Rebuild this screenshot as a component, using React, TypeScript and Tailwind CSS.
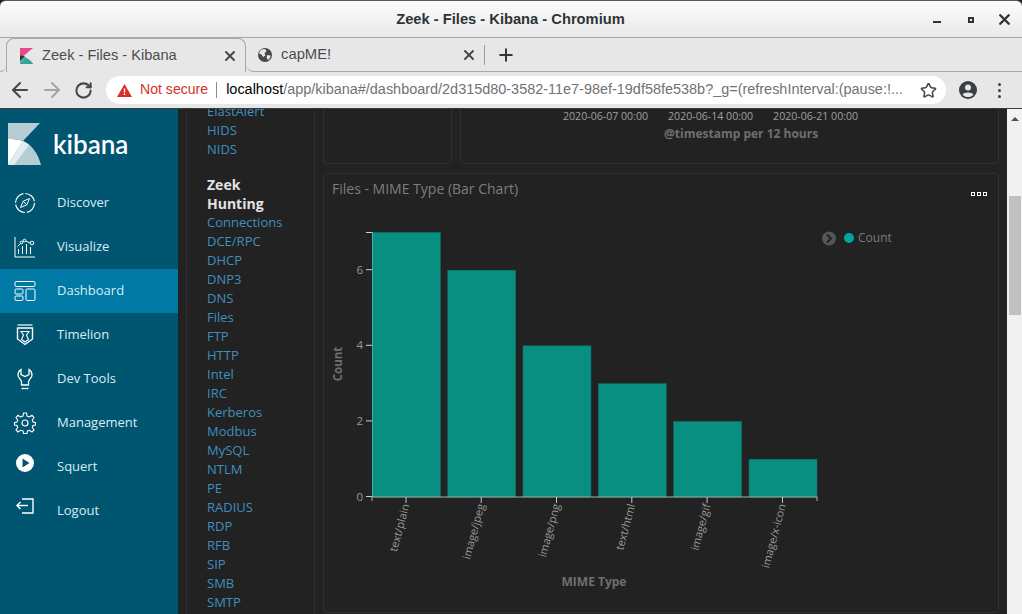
import React from 'react';
import { ArrowLeft, ArrowRight, RotateCw, Star, X, Plus } from 'lucide-react';

const sans = "font-['Liberation_Sans',Arial,sans-serif]";
const open = "font-['Open_Sans',sans-serif]";

const iconProps = {
  width: 22,
  height: 22,
  viewBox: '0 0 22 22',
  fill: 'none',
  stroke: 'white',
  strokeWidth: 1,
};

function DiscoverIcon() {
  return (
    <svg {...iconProps}>
      <circle cx="11" cy="11" r="9.5" strokeWidth="1.2" strokeDasharray="13 1.9" />
      <path d="M15.5 6.5 L12.8 12.8 L6.5 15.5 L9.2 9.2 Z" />
      <path d="M9.2 9.2 L12.8 12.8" />
    </svg>
  );
}

function VisualizeIcon() {
  return (
    <svg {...iconProps}>
      <path d="M1 1V21H21" />
      <path d="M3.5 10.5 L7.5 6.5 L10.5 4.5 L16 7" />
      <circle cx="7.5" cy="6.5" r="1.3" fill="#005571" />
      <circle cx="10.5" cy="4.5" r="1.3" fill="#005571" />
      <circle cx="18" cy="7" r="1.8" fill="#005571" />
      <path d="M4.5 13V18M8.5 10V18M12.5 8V18M16.5 11V18" />
    </svg>
  );
}

function DashboardIcon() {
  return (
    <svg {...iconProps}>
      <rect x="1" y="1.5" width="20" height="5" rx="1.2" />
      <rect x="1" y="9" width="8" height="5" rx="1.2" />
      <rect x="1" y="16" width="8" height="4.5" rx="1.2" />
      <rect x="12" y="9" width="9" height="11.5" rx="1.2" />
    </svg>
  );
}

function TimelionIcon() {
  return (
    <svg {...iconProps}>
      <path d="M3.5 1H18.5" strokeWidth="1.2" />
      <path d="M3.5 4H18.5V15L11 20.5L3.5 15Z" strokeWidth="1.4" />
      <path d="M7 7.5H15L12.5 11L14.5 15.5L11 18L7.5 15.5L9.5 11Z" strokeWidth="1.1" />
    </svg>
  );
}

function DevToolsIcon() {
  return (
    <svg {...iconProps}>
      <path d="M7 1.5C4.5 3 4 5 4 7C4 10 7 11.5 7.5 13.5V17H14.5V13.5C15 11.5 18 10 18 7C18 5 17.5 3 15 1.5V6.5L11 8.5L7 6.5Z" strokeWidth="1.3" />
      <path d="M7.5 20.5H14.5" strokeWidth="1.3" />
    </svg>
  );
}

function ManagementIcon() {
  return (
    <svg {...iconProps}>
      <circle cx="11" cy="11" r="3" strokeWidth="1.2" />
      <path d="M9.5 1H12.5L13 4L15.5 5L18 3.3L20 5.5L18.3 8L19 10L21.5 10.5V13L19 13.5L18.3 15.5L20 18L18 20L15.5 18.3L13.5 19L13 21.5H9.5L9 19L6.5 18.3L4 20L2 18L3.7 15.5L3 13.5L0.5 13V10.5L3 10L3.7 8L2 5.5L4 3.3L6.5 5L9 4Z" strokeWidth="1.1" />
    </svg>
  );
}

function SquertIcon() {
  return (
    <svg width="18" height="18" viewBox="0 0 18 18">
      <circle cx="9" cy="9" r="9" fill="white" />
      <path d="M6.5 4.5L13.5 9L6.5 13.5Z" fill="#005571" />
    </svg>
  );
}

function LogoutIcon() {
  return (
    <svg width="18" height="16" viewBox="0 0 18 16" fill="none" stroke="white" strokeWidth="1.4">
      <path d="M6 1H17V15H6" />
      <path d="M1 7.5H12" />
      <path d="M4.5 4L1 7.5L4.5 11" />
    </svg>
  );
}

const navItems = [
  { label: 'Discover', icon: <DiscoverIcon />, iconClass: '' },
  { label: 'Visualize', icon: <VisualizeIcon />, iconClass: '' },
  { label: 'Dashboard', icon: <DashboardIcon />, iconClass: '', active: true },
  { label: 'Timelion', icon: <TimelionIcon />, iconClass: '' },
  { label: 'Dev Tools', icon: <DevToolsIcon />, iconClass: '' },
  { label: 'Management', icon: <ManagementIcon />, iconClass: '' },
  { label: 'Squert', icon: <SquertIcon />, iconClass: 'mb-[8px]' },
  { label: 'Logout', icon: <LogoutIcon />, iconClass: 'mb-[10px]' },
];

const zeekLinks = [
  'Connections', 'DCE/RPC', 'DHCP', 'DNP3', 'DNS', 'Files', 'FTP', 'HTTP', 'Intel', 'IRC',
  'Kerberos', 'Modbus', 'MySQL', 'NTLM', 'PE', 'RADIUS', 'RDP', 'RFB', 'SIP', 'SMB', 'SMTP',
];

const bars = [
  { label: 'text/plain', count: 7, x: 372.5 },
  { label: 'image/jpeg', count: 6, x: 447.7 },
  { label: 'image/png', count: 4, x: 523 },
  { label: 'text/html', count: 3, x: 598.3 },
  { label: 'image/gif', count: 2, x: 673.6 },
  { label: 'image/x-icon', count: 1, x: 749 },
];

const UNIT = 37.8;

function TitleBar() {
  return (
    <div className="relative flex h-[38px] shrink-0 items-center justify-center rounded-t-md border-t border-b border-t-[#5a5a5a] border-b-[#a8a8a8] bg-gradient-to-b from-[#fbfbfb] to-[#e9e9e9]">
      <span className="mr-[1px] text-[14.7px] font-bold text-[#2e3436]">Zeek - Files - Kibana - Chromium</span>
      <div className="absolute right-[9px] top-[10px] flex items-center">
        <div className="mt-[5px] h-[2px] w-[8px] bg-[#2e3436]" />
        <div className="ml-[27px] h-[6px] w-[6px] border-[2px] border-[#2e3436]" />
        <X size={17} strokeWidth={3.4} color="#2e3436" className="ml-[22px]" />
      </div>
    </div>
  );
}

function TabBar() {
  return (
    <div className="flex h-[34px] shrink-0 bg-[#e7e7e7]">
      <div className="w-[6px] rounded-br-lg border-b border-[#a8a8a8]" />
      <div className="flex w-[240px] items-center rounded-t-lg border border-b-0 border-[#a8a8a8] pl-[13px] pr-[7px]">
        <svg width="13" height="16" viewBox="0 0 13 16">
          <path d="M0 0H13L0 11Z" fill="#e8488b" />
          <path d="M0 11L4 7.5L13 16H0Z" fill="#3ebeb0" />
          <path d="M0 16L6 10C9 11 11.5 13 13 16Z" fill="#37a595" />
          <path d="M0 7.5C2 7.5 3 7.8 4.5 8.5L0 13Z" fill="#353535" />
        </svg>
        <span className="ml-[9px] flex-1 text-[14.6px] text-[#4a4d50]">Zeek - Files - Kibana</span>
        <X size={16} strokeWidth={3} color="#45494c" />
      </div>
      <div className="flex flex-1 items-center rounded-bl-lg border-b border-[#a8a8a8] pl-[12px]">
        <svg width="14" height="14" viewBox="0 0 14 14">
          <circle cx="7" cy="7" r="7" fill="#45494c" />
          <path d="M3.5 1.5L7 1L8.5 3L6.5 5.5L7.5 7.5L5 9L3.5 6.5L1 5.5C1.5 3.5 2.5 2.5 3.5 1.5Z" fill="#e7e7e7" />
          <path d="M9.5 7L12.5 7.5C12.5 9.5 11.5 11 10 12L8.5 9.5Z" fill="#e7e7e7" />
        </svg>
        <span className="ml-[9px] w-[180px] text-[14.8px] text-[#4a4d50]">capME!</span>
        <X size={16} strokeWidth={3} color="#45494c" />
        <div className="ml-[7px] h-[20px] w-px bg-[#9a9a9a]" />
        <Plus size={20} strokeWidth={2.4} color="#33373a" className="ml-[11px]" />
      </div>
    </div>
  );
}

function Toolbar() {
  return (
    <div className="flex h-[37px] shrink-0 items-center border-b border-[#3c3c3c] bg-[#e7e7e7] pl-[8px]">
      <ArrowLeft size={24} strokeWidth={2} color="#44484b" />
      <ArrowRight size={24} strokeWidth={2} color="#a3a5a7" className="ml-[8px]" />
      <RotateCw size={19} strokeWidth={2.6} color="#44484b" className="ml-[10px]" />
      <div className="ml-[13px] flex h-[28px] w-[840px] items-center rounded-full bg-white pl-[11px] pr-[9px]">
        <svg width="15" height="13" viewBox="0 0 15 13">
          <path d="M7.5 0L15 13H0Z" fill="#d93025" />
          <path d="M6.8 4.5H8.2V8.5H6.8ZM6.8 9.5H8.2V11H6.8Z" fill="white" />
        </svg>
        <span className="ml-[8px] text-[14.1px] text-[#d93025]">Not secure</span>
        <div className="ml-[8px] h-[16px] w-px bg-[#8a8a8a]" />
        <div className="ml-[9px] w-[680px] overflow-hidden whitespace-nowrap text-[14.45px] text-[#6f7377]">
          <span className="text-black">localhost</span>/app/kibana#/dashboard/2d315d80-3582-11e7-98ef-19df58fe538b?_g=(refreshInterval:(pause:!...
        </div>
        <Star size={17} strokeWidth={2.2} color="#44484b" className="ml-auto" />
      </div>
      <svg width="18" height="18" viewBox="0 0 18 18" className="ml-[13px]">
        <circle cx="9" cy="9" r="9" fill="#3a3e41" />
        <circle cx="9" cy="6.5" r="3" fill="#e7e7e7" />
        <path d="M3.5 13.5C5 10.8 13 10.8 14.5 13.5C13 15.5 11 16 9 16C7 16 5 15.5 3.5 13.5Z" fill="#e7e7e7" />
      </svg>
      <div className="ml-[21px] flex flex-col gap-[3px]">
        <div className="h-[3px] w-[3px] rounded-full bg-[#3a3e41]" />
        <div className="h-[3px] w-[3px] rounded-full bg-[#3a3e41]" />
        <div className="h-[3px] w-[3px] rounded-full bg-[#3a3e41]" />
      </div>
    </div>
  );
}

function Sidebar() {
  return (
    <aside className={`w-[178px] shrink-0 bg-[#005571] ${open}`}>
      <div className="flex h-[72px] items-start pl-[8px] pt-[14px]">
        <svg width="33" height="42" viewBox="0 0 33 42">
          <path d="M0 0H32L15 18C10 16.5 5 16 0 16Z" fill="#b6cdd4" />
          <path d="M15 18C23 21 30 30 33 42H0Z" fill="#b6cdd4" />
          <path d="M0 16C5 16 10 16.5 15 18L0 42Z" fill="white" />
          <path d="M15 18C17 19 19 20.5 21 22L6 42H0Z" fill="#e3ecef" />
        </svg>
        <span className="ml-[12px] mt-[3px] text-[26px] leading-[36px] font-semibold text-white font-['Lato',sans-serif]">kibana</span>
      </div>
      {navItems.map(item => (
        <div
          key={item.label}
          className={`flex h-[44px] items-center ${item.active ? 'bg-[#0079a5]' : ''}`}
        >
          <div className={`flex w-[57px] shrink-0 justify-center pr-[7px] ${item.iconClass}`}>{item.icon}</div>
          <span className="text-[13px] text-[#d8eef5]">{item.label}</span>
        </div>
      ))}
    </aside>
  );
}

function DashboardNav() {
  return (
    <div className={`flex w-[137px] shrink-0 bg-[#222222] pl-[8px] ${open}`}>
      <div className="h-full w-[129px] overflow-hidden border-x border-[#2e2e2e] pl-[20px] text-[13px] leading-[19px] text-[#3f8fbf]">
        <div className="mt-[-7px]">ElastAlert</div>
        <div>HIDS</div>
        <div>NIDS</div>
        <div className="mt-[16px] text-[14px] font-bold text-[#e4e4e4]">Zeek</div>
        <div className="text-[14px] font-bold text-[#e4e4e4]">Hunting</div>
        {zeekLinks.map(link => (
          <div key={link}>{link}</div>
        ))}
      </div>
    </div>
  );
}

function BarChart() {
  return (
    <svg width="674" height="391" viewBox="324 221 674 391" className={open}>
      {/* bars */}
      {bars.map(bar => (
        <rect
          key={bar.label}
          x={bar.x}
          y={497 - bar.count * UNIT}
          width="68"
          height={bar.count * UNIT}
          fill="#088f82"
          stroke="#0b6f66"
          strokeWidth="0.5"
        />
      ))}
      {/* y axis */}
      <path d="M372.5 232V497" stroke="#3bb5a8" strokeWidth="1" />
      {[0, 2, 4, 6].map(tick => (
        <g key={tick}>
          <line x1="366" x2="372" y1={496.5 - tick * UNIT} y2={496.5 - tick * UNIT} stroke="#d0d0d0" />
          <text x="363" y={500.5 - tick * UNIT} textAnchor="end" fontSize="11.5" fill="#9a9a9a">{tick}</text>
        </g>
      ))}
      <line x1="366" x2="372" y1="232.5" y2="232.5" stroke="#d0d0d0" />
      <text x="342" y="364" textAnchor="middle" fontSize="11.5" fontWeight="700" fill="#6f6f6f" transform="rotate(-90 342 364)">Count</text>
      {/* x axis */}
      <path d="M372 497H817.5" stroke="#9ab5b1" strokeWidth="1.2" />
      <path d="M372 497V501M817 497V501" stroke="#9a9a9a" strokeWidth="1.2" />
      {bars.map(bar => (
        <g key={bar.label}>
          <line x1={bar.x + 33.5} x2={bar.x + 33.5} y1="497" y2="503" stroke="#c8c8c8" />
          <text
            x={bar.x + 37}
            y="505"
            textAnchor="end"
            fontSize="11"
            fill="#9a9a9a"
            transform={`rotate(-75 ${bar.x + 37} 505)`}
          >
            {bar.label}
          </text>
        </g>
      ))}
      <text x="594" y="586" textAnchor="middle" fontSize="12" fontWeight="700" fill="#6f6f6f">MIME Type</text>
      {/* legend */}
      <circle cx="829" cy="238.5" r="7" fill="#555555" />
      <path d="M827 234.5L831 238.5L827 242.5" fill="none" stroke="#222222" strokeWidth="2" />
      <circle cx="849" cy="238" r="5" fill="#00a69b" />
      <text x="858" y="242" fontSize="12" fill="#7a7a7a">Count</text>
    </svg>
  );
}

function Main() {
  return (
    <main className={`flex min-w-0 flex-1 flex-col gap-[9px] bg-[#222222] px-[8px] pb-px ${open}`}>
      <div className="flex h-[55px] shrink-0 gap-[8px]">
        <div className="w-[129px] rounded-b border-x border-b border-[#303030]" />
        <div className="flex flex-1 flex-col rounded-b border-x border-b border-[#303030]">
          <div className="ml-[102px] flex gap-[20px] text-[10.6px] leading-[14px] text-[#a0a0a0]">
            <span>2020-06-07 00:00</span>
            <span>2020-06-14 00:00</span>
            <span>2020-06-21 00:00</span>
          </div>
          <div className="ml-[203px] mt-[3px] text-[12px] font-bold leading-[16px] text-[#6f6f6f]">@timestamp per 12 hours</div>
        </div>
      </div>
      <div className="min-h-0 flex-1 rounded border border-[#303030]">
        <div className="flex h-[47px] items-start justify-between pl-[8px] pr-[11px] pt-[5px]">
          <span className="text-[14px] leading-[19px] text-[#7d7d7d]">Files - MIME Type (Bar Chart)</span>
          <div className="mt-[13px] flex gap-[2px]">
            <div className="h-[4px] w-[4px] border border-white" />
            <div className="h-[4px] w-[4px] border border-white" />
            <div className="h-[4px] w-[4px] border border-white" />
          </div>
        </div>
        <BarChart />
      </div>
    </main>
  );
}

function Scrollbar() {
  return (
    <div className="flex w-[15px] shrink-0 flex-col items-center bg-[#f1f1f1]">
      <div className="mt-[8px] h-0 w-0 border-x-[4px] border-b-[4px] border-x-transparent border-b-[#505050]" />
      <div className="mt-[75px] h-[119px] w-[12px] bg-[#c1c1c1]" />
    </div>
  );
}

export default function App() {
  return (
    <div className={`flex h-[614px] w-[1022px] flex-col overflow-hidden bg-[#222222] ${sans}`}>
      <TitleBar />
      <TabBar />
      <Toolbar />
      <div className="flex min-h-0 flex-1">
        <Sidebar />
        <DashboardNav />
        <Main />
        <Scrollbar />
      </div>
    </div>
  );
}
